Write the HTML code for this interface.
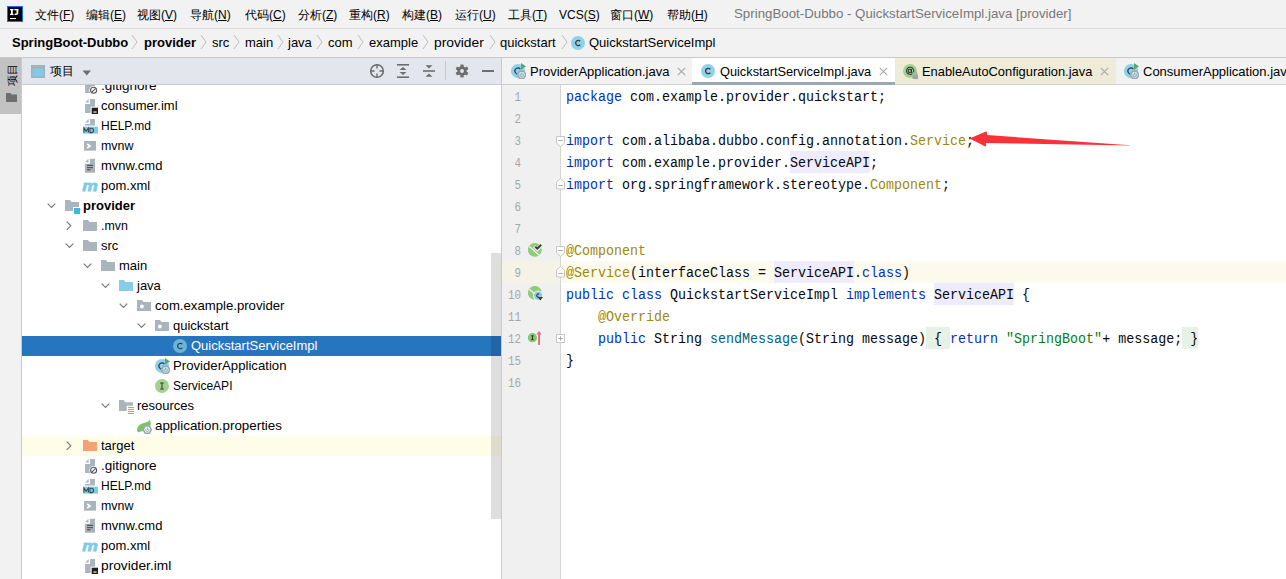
<!DOCTYPE html><html><head><meta charset="utf-8"><style>html,body{margin:0;padding:0;width:1286px;height:579px;overflow:hidden;background:#f2f2f2;position:relative}</style></head><body><div style="position:absolute;left:0px;top:0px;width:1286px;height:28px;background:#f2f2f2;"></div><div style="position:absolute;left:0px;top:28px;width:1286px;height:1px;background:#dcdcdc;"></div><svg style="position:absolute;left:7px;top:6px" width="16" height="16" viewBox="0 0 16 16"><rect x="0.5" y="0.5" width="15" height="15" fill="#000" stroke="#1a6ff5" stroke-width="1"/><g fill="#fff"><rect x="3" y="3" width="3.5" height="1.3"/><rect x="4" y="3" width="1.8" height="6"/><rect x="3" y="7.8" width="3.5" height="1.3"/><rect x="7.3" y="3" width="4" height="1.3"/><path d="M9.5 3 H11.3 V7 Q11.3 9.1 9.1 9.1 Q7.8 9.1 7.2 8.2 L8.2 7.3 Q8.5 7.7 9 7.7 Q9.5 7.7 9.5 7 Z"/></g><rect x="3" y="12" width="6" height="1.1" fill="#fff"/></svg><div style="position:absolute;left:35px;top:9.00px;font-family:'Liberation Sans', sans-serif;font-size:12px;line-height:12px;color:#000;font-weight:normal;white-space:pre;"><span style="font-weight:500">文件</span>(<u>F</u>)</div><div style="position:absolute;left:86px;top:9.00px;font-family:'Liberation Sans', sans-serif;font-size:12px;line-height:12px;color:#000;font-weight:normal;white-space:pre;"><span style="font-weight:500">编辑</span>(<u>E</u>)</div><div style="position:absolute;left:137px;top:9.00px;font-family:'Liberation Sans', sans-serif;font-size:12px;line-height:12px;color:#000;font-weight:normal;white-space:pre;"><span style="font-weight:500">视图</span>(<u>V</u>)</div><div style="position:absolute;left:190px;top:9.00px;font-family:'Liberation Sans', sans-serif;font-size:12px;line-height:12px;color:#000;font-weight:normal;white-space:pre;"><span style="font-weight:500">导航</span>(<u>N</u>)</div><div style="position:absolute;left:245px;top:9.00px;font-family:'Liberation Sans', sans-serif;font-size:12px;line-height:12px;color:#000;font-weight:normal;white-space:pre;"><span style="font-weight:500">代码</span>(<u>C</u>)</div><div style="position:absolute;left:298px;top:9.00px;font-family:'Liberation Sans', sans-serif;font-size:12px;line-height:12px;color:#000;font-weight:normal;white-space:pre;"><span style="font-weight:500">分析</span>(<u>Z</u>)</div><div style="position:absolute;left:349px;top:9.00px;font-family:'Liberation Sans', sans-serif;font-size:12px;line-height:12px;color:#000;font-weight:normal;white-space:pre;"><span style="font-weight:500">重构</span>(<u>R</u>)</div><div style="position:absolute;left:402px;top:9.00px;font-family:'Liberation Sans', sans-serif;font-size:12px;line-height:12px;color:#000;font-weight:normal;white-space:pre;"><span style="font-weight:500">构建</span>(<u>B</u>)</div><div style="position:absolute;left:455px;top:9.00px;font-family:'Liberation Sans', sans-serif;font-size:12px;line-height:12px;color:#000;font-weight:normal;white-space:pre;"><span style="font-weight:500">运行</span>(<u>U</u>)</div><div style="position:absolute;left:508px;top:9.00px;font-family:'Liberation Sans', sans-serif;font-size:12px;line-height:12px;color:#000;font-weight:normal;white-space:pre;"><span style="font-weight:500">工具</span>(<u>T</u>)</div><div style="position:absolute;left:559px;top:9.00px;font-family:'Liberation Sans', sans-serif;font-size:12px;line-height:12px;color:#000;font-weight:normal;white-space:pre;">VCS(<u>S</u>)</div><div style="position:absolute;left:610px;top:9.00px;font-family:'Liberation Sans', sans-serif;font-size:12px;line-height:12px;color:#000;font-weight:normal;white-space:pre;"><span style="font-weight:500">窗口</span>(<u>W</u>)</div><div style="position:absolute;left:667px;top:9.00px;font-family:'Liberation Sans', sans-serif;font-size:12px;line-height:12px;color:#000;font-weight:normal;white-space:pre;"><span style="font-weight:500">帮助</span>(<u>H</u>)</div><div style="position:absolute;left:734px;top:7.00px;font-family:'Liberation Sans', sans-serif;font-size:13px;line-height:13px;color:#787878;font-weight:normal;white-space:pre;transform:scaleX(1.022);transform-origin:0 0;">SpringBoot-Dubbo - QuickstartServiceImpl.java [provider]</div><div style="position:absolute;left:0px;top:29px;width:1286px;height:28px;background:#f2f2f2;"></div><div style="position:absolute;left:0px;top:57px;width:1286px;height:1px;background:#c9c9c9;"></div><div style="position:absolute;left:12px;top:36.00px;font-family:'Liberation Sans', sans-serif;font-size:13px;line-height:13px;color:#000;font-weight:bold;white-space:pre;">SpringBoot-Dubbo</div><svg style="position:absolute;left:131px;top:34px" width="7" height="16" viewBox="0 0 7 16"><polyline points="1,1 6,8 1,15" fill="none" stroke="#bdbdbd" stroke-width="1"/></svg><div style="position:absolute;left:144px;top:36.00px;font-family:'Liberation Sans', sans-serif;font-size:13px;line-height:13px;color:#000;font-weight:bold;white-space:pre;">provider</div><svg style="position:absolute;left:200px;top:34px" width="7" height="16" viewBox="0 0 7 16"><polyline points="1,1 6,8 1,15" fill="none" stroke="#bdbdbd" stroke-width="1"/></svg><div style="position:absolute;left:212px;top:36.00px;font-family:'Liberation Sans', sans-serif;font-size:13px;line-height:13px;color:#000;font-weight:normal;white-space:pre;">src</div><svg style="position:absolute;left:233px;top:34px" width="7" height="16" viewBox="0 0 7 16"><polyline points="1,1 6,8 1,15" fill="none" stroke="#bdbdbd" stroke-width="1"/></svg><div style="position:absolute;left:245px;top:36.00px;font-family:'Liberation Sans', sans-serif;font-size:13px;line-height:13px;color:#000;font-weight:normal;white-space:pre;">main</div><svg style="position:absolute;left:277px;top:34px" width="7" height="16" viewBox="0 0 7 16"><polyline points="1,1 6,8 1,15" fill="none" stroke="#bdbdbd" stroke-width="1"/></svg><div style="position:absolute;left:288px;top:36.00px;font-family:'Liberation Sans', sans-serif;font-size:13px;line-height:13px;color:#000;font-weight:normal;white-space:pre;">java</div><svg style="position:absolute;left:316px;top:34px" width="7" height="16" viewBox="0 0 7 16"><polyline points="1,1 6,8 1,15" fill="none" stroke="#bdbdbd" stroke-width="1"/></svg><div style="position:absolute;left:328px;top:36.00px;font-family:'Liberation Sans', sans-serif;font-size:13px;line-height:13px;color:#000;font-weight:normal;white-space:pre;">com</div><svg style="position:absolute;left:357px;top:34px" width="7" height="16" viewBox="0 0 7 16"><polyline points="1,1 6,8 1,15" fill="none" stroke="#bdbdbd" stroke-width="1"/></svg><div style="position:absolute;left:369px;top:36.00px;font-family:'Liberation Sans', sans-serif;font-size:13px;line-height:13px;color:#000;font-weight:normal;white-space:pre;">example</div><svg style="position:absolute;left:422px;top:34px" width="7" height="16" viewBox="0 0 7 16"><polyline points="1,1 6,8 1,15" fill="none" stroke="#bdbdbd" stroke-width="1"/></svg><div style="position:absolute;left:434px;top:36.00px;font-family:'Liberation Sans', sans-serif;font-size:13px;line-height:13px;color:#000;font-weight:normal;white-space:pre;transform:scaleX(1.06);transform-origin:0 0;">provider</div><svg style="position:absolute;left:489px;top:34px" width="7" height="16" viewBox="0 0 7 16"><polyline points="1,1 6,8 1,15" fill="none" stroke="#bdbdbd" stroke-width="1"/></svg><div style="position:absolute;left:500px;top:36.00px;font-family:'Liberation Sans', sans-serif;font-size:13px;line-height:13px;color:#000;font-weight:normal;white-space:pre;">quickstart</div><svg style="position:absolute;left:561px;top:34px" width="7" height="16" viewBox="0 0 7 16"><polyline points="1,1 6,8 1,15" fill="none" stroke="#bdbdbd" stroke-width="1"/></svg><svg style="position:absolute;left:571px;top:36px" width="14" height="14" viewBox="0 0 14 14"><circle cx="7" cy="7" r="7" fill="#8dd1ec"/><path d="M9.2 5.2 A2.6 2.6 0 1 0 9.2 8.8" fill="none" stroke="#3a3a3a" stroke-width="1.3"/></svg><div style="position:absolute;left:589px;top:36.00px;font-family:'Liberation Sans', sans-serif;font-size:13px;line-height:13px;color:#000;font-weight:normal;white-space:pre;">QuickstartServiceImpl</div><div style="position:absolute;left:0px;top:58px;width:21px;height:521px;background:#f2f2f2;"></div><div style="position:absolute;left:0px;top:58px;width:21px;height:56px;background:#c2c2c2;"></div><div style="position:absolute;left:21px;top:58px;width:1px;height:521px;background:#c9c9c9;"></div><div style="position:absolute;left:2px;top:63px;width:20px;height:24px;"><div style="position:absolute;left:-2px;top:4px;width:24px;height:16px;transform:rotate(-90deg);font-family:'Liberation Sans', sans-serif;font-size:11px;line-height:16px;color:#000;text-align:center;font-weight:500">项目</div></div><svg style="position:absolute;left:6px;top:93px" width="11" height="9" viewBox="0 0 11 9"><path d="M0 0 H4.5 L5.5 1.5 H11 V9 H0 Z" fill="#6e6e6e"/></svg><div style="position:absolute;left:22px;top:58px;width:479px;height:521px;background:#ffffff;"></div><svg style="position:absolute;left:82px;top:78px" width="16" height="16" viewBox="0 0 16 16"><path d="M3.1 4.6 L6.7 1.1 V4.6 Z" fill="#aab4bd"/><path d="M8.1 1.1 H13 V15 H3.1 V6.1 H8.1 Z" fill="#aab4bd"/><circle cx="11.6" cy="12.3" r="4.3" fill="#fff"/><circle cx="11.6" cy="12.3" r="3" fill="none" stroke="#555" stroke-width="1.1"/><path d="M9.6 14.3 L13.6 10.3" stroke="#555" stroke-width="1.1"/></svg><div style="position:absolute;left:101px;top:79.00px;font-family:'Liberation Sans', sans-serif;font-size:13px;line-height:13px;color:#000;font-weight:normal;white-space:pre;transform:scaleX(1.04);transform-origin:0 0;">.gitignore</div><svg style="position:absolute;left:82px;top:98px" width="16" height="16" viewBox="0 0 16 16"><path d="M3.1 4.6 L6.7 1.1 V4.6 Z" fill="#aab4bd"/><path d="M8.1 1.1 H13 V15 H3.1 V6.1 H8.1 Z" fill="#aab4bd"/><rect x="8.7" y="8.7" width="8" height="7.6" fill="#fff"/><rect x="9.7" y="9.7" width="6.5" height="6.4" fill="#231f20"/><rect x="11.4" y="13.5" width="3.2" height="1.1" fill="#fff"/></svg><div style="position:absolute;left:101px;top:99.00px;font-family:'Liberation Sans', sans-serif;font-size:13px;line-height:13px;color:#000;font-weight:normal;white-space:pre;">consumer.iml</div><svg style="position:absolute;left:82px;top:118px" width="16" height="16" viewBox="0 0 16 16"><path d="M3.1 4.6 L6.7 1.1 V4.6 Z" fill="#aab4bd"/><path d="M8.1 1.1 H13 V7.6 H3.1 V6.1 H8.1 Z" fill="#aab4bd"/><rect x="1" y="8.7" width="15.2" height="6.9" fill="#7fcbe6"/><path d="M2 14.6 V10.2 L4.2 13 L6.4 10.2 V14.6 M8 10.2 V14.6 H9.5 Q11.5 14.6 11.5 12.4 Q11.5 10.2 9.5 10.2 H8 Z" fill="none" stroke="#3d4650" stroke-width="1.1"/></svg><div style="position:absolute;left:101px;top:119.00px;font-family:'Liberation Sans', sans-serif;font-size:13px;line-height:13px;color:#000;font-weight:normal;white-space:pre;transform:scaleX(0.924);transform-origin:0 0;">HELP.md</div><svg style="position:absolute;left:82px;top:138px" width="16" height="16" viewBox="0 0 16 16"><rect x="2.1" y="3" width="11.9" height="9.7" fill="#aab4bd"/><polyline points="5.2,6 7.9,8.1 5.2,10.2" fill="none" stroke="#fff" stroke-width="1.7"/></svg><div style="position:absolute;left:101px;top:139.00px;font-family:'Liberation Sans', sans-serif;font-size:13px;line-height:13px;color:#000;font-weight:normal;white-space:pre;transform:scaleX(0.956);transform-origin:0 0;">mvnw</div><svg style="position:absolute;left:82px;top:158px" width="16" height="16" viewBox="0 0 16 16"><path d="M2.9 4.3 L6.5 0.8 V4.3 Z" fill="#aab4bd"/><path d="M7.9 0.8 H13 V14.8 H2.9 V5.8 H7.9 Z" fill="#aab4bd"/><g fill="#4d4d4d"><rect x="5" y="6.8" width="6" height="1.1"/><rect x="5" y="9.1" width="6" height="1.1"/><rect x="5" y="11.3" width="3.6" height="1.1"/></g></svg><div style="position:absolute;left:101px;top:159.00px;font-family:'Liberation Sans', sans-serif;font-size:13px;line-height:13px;color:#000;font-weight:normal;white-space:pre;">mvnw.cmd</div><svg style="position:absolute;left:82px;top:178px" width="16" height="16" viewBox="0 0 16 16"><text x="0.3" y="12.9" font-family="Liberation Sans" font-style="italic" font-weight="bold" font-size="14.5" fill="#7fcbe6" stroke="#7fcbe6" stroke-width="0.8" textLength="15.5" lengthAdjust="spacingAndGlyphs">m</text></svg><div style="position:absolute;left:101px;top:179.00px;font-family:'Liberation Sans', sans-serif;font-size:13px;line-height:13px;color:#000;font-weight:normal;white-space:pre;">pom.xml</div><svg style="position:absolute;left:47px;top:203px" width="10" height="6" viewBox="0 0 10 6"><polyline points="0.7,0.7 4.5,4.5 8.3,0.7" fill="none" stroke="#7a7a7a" stroke-width="1.2"/></svg><svg style="position:absolute;left:64px;top:198px" width="16" height="16" viewBox="0 0 16 16"><path d="M1 2 H6 L7.5 4 H15 V9 H9 V13 H1 Z" fill="#aab4bd"/><rect x="10" y="10" width="6" height="6" fill="#40b6e0"/></svg><div style="position:absolute;left:83px;top:199.00px;font-family:'Liberation Sans', sans-serif;font-size:13px;line-height:13px;color:#000;font-weight:bold;white-space:pre;">provider</div><svg style="position:absolute;left:66px;top:221px" width="6" height="10" viewBox="0 0 6 10"><polyline points="0.7,0.7 4.8,4.8 0.7,8.9" fill="none" stroke="#7a7a7a" stroke-width="1.2"/></svg><svg style="position:absolute;left:82px;top:218px" width="16" height="16" viewBox="0 0 16 16"><path d="M1 2 H6 L7.5 4 H15 V13 H1 Z" fill="#aab4bd"/></svg><div style="position:absolute;left:101px;top:219.00px;font-family:'Liberation Sans', sans-serif;font-size:13px;line-height:13px;color:#000;font-weight:normal;white-space:pre;transform:scaleX(0.95);transform-origin:0 0;">.mvn</div><svg style="position:absolute;left:65px;top:243px" width="10" height="6" viewBox="0 0 10 6"><polyline points="0.7,0.7 4.5,4.5 8.3,0.7" fill="none" stroke="#7a7a7a" stroke-width="1.2"/></svg><svg style="position:absolute;left:82px;top:238px" width="16" height="16" viewBox="0 0 16 16"><path d="M1 2 H6 L7.5 4 H15 V13 H1 Z" fill="#aab4bd"/></svg><div style="position:absolute;left:101px;top:239.00px;font-family:'Liberation Sans', sans-serif;font-size:13px;line-height:13px;color:#000;font-weight:normal;white-space:pre;">src</div><svg style="position:absolute;left:83px;top:263px" width="10" height="6" viewBox="0 0 10 6"><polyline points="0.7,0.7 4.5,4.5 8.3,0.7" fill="none" stroke="#7a7a7a" stroke-width="1.2"/></svg><svg style="position:absolute;left:100px;top:258px" width="16" height="16" viewBox="0 0 16 16"><path d="M1 2 H6 L7.5 4 H15 V13 H1 Z" fill="#aab4bd"/></svg><div style="position:absolute;left:119px;top:259.00px;font-family:'Liberation Sans', sans-serif;font-size:13px;line-height:13px;color:#000;font-weight:normal;white-space:pre;">main</div><svg style="position:absolute;left:101px;top:283px" width="10" height="6" viewBox="0 0 10 6"><polyline points="0.7,0.7 4.5,4.5 8.3,0.7" fill="none" stroke="#7a7a7a" stroke-width="1.2"/></svg><svg style="position:absolute;left:118px;top:278px" width="16" height="16" viewBox="0 0 16 16"><path d="M1 2 H6 L7.5 4 H15 V13 H1 Z" fill="#86cde8"/></svg><div style="position:absolute;left:137px;top:279.00px;font-family:'Liberation Sans', sans-serif;font-size:13px;line-height:13px;color:#000;font-weight:normal;white-space:pre;">java</div><svg style="position:absolute;left:119px;top:303px" width="10" height="6" viewBox="0 0 10 6"><polyline points="0.7,0.7 4.5,4.5 8.3,0.7" fill="none" stroke="#7a7a7a" stroke-width="1.2"/></svg><svg style="position:absolute;left:136px;top:298px" width="16" height="16" viewBox="0 0 16 16"><path d="M1 2 H6 L7.5 4 H15 V13 H1 Z" fill="#aab4bd"/><circle cx="5.9" cy="8.5" r="1.9" fill="#fff"/></svg><div style="position:absolute;left:155px;top:299.00px;font-family:'Liberation Sans', sans-serif;font-size:13px;line-height:13px;color:#000;font-weight:normal;white-space:pre;transform:scaleX(1.012);transform-origin:0 0;">com.example.provider</div><svg style="position:absolute;left:137px;top:323px" width="10" height="6" viewBox="0 0 10 6"><polyline points="0.7,0.7 4.5,4.5 8.3,0.7" fill="none" stroke="#7a7a7a" stroke-width="1.2"/></svg><svg style="position:absolute;left:154px;top:318px" width="16" height="16" viewBox="0 0 16 16"><path d="M1 2 H6 L7.5 4 H15 V13 H1 Z" fill="#aab4bd"/><circle cx="5.9" cy="8.5" r="1.9" fill="#fff"/></svg><div style="position:absolute;left:173px;top:319.00px;font-family:'Liberation Sans', sans-serif;font-size:13px;line-height:13px;color:#000;font-weight:normal;white-space:pre;">quickstart</div><div style="position:absolute;left:22px;top:336px;width:479px;height:20px;background:#2675bf;"></div><svg style="position:absolute;left:172px;top:338px" width="16" height="16" viewBox="0 0 16 16"><circle cx="8" cy="8" r="7" fill="#6ab5d6"/><path d="M10.3 6.2 A2.7 2.7 0 1 0 10.3 9.8" fill="none" stroke="#333e48" stroke-width="1.15"/></svg><div style="position:absolute;left:191px;top:339.00px;font-family:'Liberation Sans', sans-serif;font-size:13px;line-height:13px;color:#fff;font-weight:normal;white-space:pre;">QuickstartServiceImpl</div><svg style="position:absolute;left:154px;top:358px" width="16" height="16" viewBox="0 0 16 16"><circle cx="8" cy="8.1" r="7.1" fill="#8dd1ec"/><path d="M10.3 6 A3.1 3.1 0 1 0 9.5 10.8" fill="none" stroke="#3a3a3a" stroke-width="1.2"/><path d="M11 0 L16 3.4 L11 6.8 Z" fill="#59a869"/><polygon points="15.90,11.80 13.80,15.44 9.60,15.44 7.50,11.80 9.60,8.16 13.80,8.16" fill="#c9e8f3" stroke="#9aa7b0" stroke-width="1.5"/><path d="M10.50 10.90 A1.7 1.7 0 1 0 12.90 10.90" fill="none" stroke="#9aa7b0" stroke-width="1"/><path d="M11.70 9.60 V12.10" stroke="#9aa7b0" stroke-width="1"/></svg><div style="position:absolute;left:173px;top:359.00px;font-family:'Liberation Sans', sans-serif;font-size:13px;line-height:13px;color:#000;font-weight:normal;white-space:pre;transform:scaleX(1.013);transform-origin:0 0;">ProviderApplication</div><svg style="position:absolute;left:154px;top:378px" width="16" height="16" viewBox="0 0 16 16"><circle cx="8" cy="8" r="7" fill="#a1d38e"/><path d="M6.2 5 H9.8 M8 5 V11 M6.2 11 H9.8" stroke="#3d3d3d" stroke-width="1.1"/></svg><div style="position:absolute;left:173px;top:379.00px;font-family:'Liberation Sans', sans-serif;font-size:13px;line-height:13px;color:#000;font-weight:normal;white-space:pre;transform:scaleX(0.925);transform-origin:0 0;">ServiceAPI</div><svg style="position:absolute;left:101px;top:403px" width="10" height="6" viewBox="0 0 10 6"><polyline points="0.7,0.7 4.5,4.5 8.3,0.7" fill="none" stroke="#7a7a7a" stroke-width="1.2"/></svg><svg style="position:absolute;left:118px;top:398px" width="16" height="16" viewBox="0 0 16 16"><path d="M1 2 H5.6 L7.5 4.3 H15 V7.7 H8.7 V13 H1 Z" fill="#aab4bd"/><g fill="#e0a33a"><rect x="10" y="9" width="6" height="1.1"/><rect x="10" y="11" width="6" height="1.1"/><rect x="10" y="13" width="6" height="1.1"/><rect x="10" y="15" width="6" height="1.1"/></g></svg><div style="position:absolute;left:137px;top:399.00px;font-family:'Liberation Sans', sans-serif;font-size:13px;line-height:13px;color:#000;font-weight:normal;white-space:pre;">resources</div><svg style="position:absolute;left:136px;top:418px" width="16" height="16" viewBox="0 0 16 16"><path d="M1.5 14 C0 9.5 3 6 8 5 C11 4.3 12.8 3.8 13.6 1.8 C15.5 5 15 9 12 11.5 C9 13.5 5 13 2.5 14.3 Z" fill="#7cc36a"/><polygon points="15.40,11.60 13.35,15.15 9.25,15.15 7.20,11.60 9.25,8.05 13.35,8.05" fill="#ffffff" stroke="#9aa7b0" stroke-width="1.5"/><path d="M10.10 10.70 A1.7 1.7 0 1 0 12.50 10.70" fill="none" stroke="#9aa7b0" stroke-width="1"/><path d="M11.30 9.40 V11.90" stroke="#9aa7b0" stroke-width="1"/></svg><div style="position:absolute;left:155px;top:419.00px;font-family:'Liberation Sans', sans-serif;font-size:13px;line-height:13px;color:#000;font-weight:normal;white-space:pre;transform:scaleX(1.027);transform-origin:0 0;">application.properties</div><div style="position:absolute;left:22px;top:436px;width:479px;height:20px;background:#fefde8;"></div><svg style="position:absolute;left:66px;top:441px" width="6" height="10" viewBox="0 0 6 10"><polyline points="0.7,0.7 4.8,4.8 0.7,8.9" fill="none" stroke="#7a7a7a" stroke-width="1.2"/></svg><svg style="position:absolute;left:82px;top:438px" width="16" height="16" viewBox="0 0 16 16"><path d="M1 2 H6 L7.5 4 H15 V13 H1 Z" fill="#f4a271"/></svg><div style="position:absolute;left:101px;top:439.00px;font-family:'Liberation Sans', sans-serif;font-size:13px;line-height:13px;color:#000;font-weight:normal;white-space:pre;">target</div><svg style="position:absolute;left:82px;top:458px" width="16" height="16" viewBox="0 0 16 16"><path d="M3.1 4.6 L6.7 1.1 V4.6 Z" fill="#aab4bd"/><path d="M8.1 1.1 H13 V15 H3.1 V6.1 H8.1 Z" fill="#aab4bd"/><circle cx="11.6" cy="12.3" r="4.3" fill="#fff"/><circle cx="11.6" cy="12.3" r="3" fill="none" stroke="#555" stroke-width="1.1"/><path d="M9.6 14.3 L13.6 10.3" stroke="#555" stroke-width="1.1"/></svg><div style="position:absolute;left:101px;top:459.00px;font-family:'Liberation Sans', sans-serif;font-size:13px;line-height:13px;color:#000;font-weight:normal;white-space:pre;transform:scaleX(1.04);transform-origin:0 0;">.gitignore</div><svg style="position:absolute;left:82px;top:478px" width="16" height="16" viewBox="0 0 16 16"><path d="M3.1 4.6 L6.7 1.1 V4.6 Z" fill="#aab4bd"/><path d="M8.1 1.1 H13 V7.6 H3.1 V6.1 H8.1 Z" fill="#aab4bd"/><rect x="1" y="8.7" width="15.2" height="6.9" fill="#7fcbe6"/><path d="M2 14.6 V10.2 L4.2 13 L6.4 10.2 V14.6 M8 10.2 V14.6 H9.5 Q11.5 14.6 11.5 12.4 Q11.5 10.2 9.5 10.2 H8 Z" fill="none" stroke="#3d4650" stroke-width="1.1"/></svg><div style="position:absolute;left:101px;top:479.00px;font-family:'Liberation Sans', sans-serif;font-size:13px;line-height:13px;color:#000;font-weight:normal;white-space:pre;transform:scaleX(0.924);transform-origin:0 0;">HELP.md</div><svg style="position:absolute;left:82px;top:498px" width="16" height="16" viewBox="0 0 16 16"><rect x="2.1" y="3" width="11.9" height="9.7" fill="#aab4bd"/><polyline points="5.2,6 7.9,8.1 5.2,10.2" fill="none" stroke="#fff" stroke-width="1.7"/></svg><div style="position:absolute;left:101px;top:499.00px;font-family:'Liberation Sans', sans-serif;font-size:13px;line-height:13px;color:#000;font-weight:normal;white-space:pre;transform:scaleX(0.956);transform-origin:0 0;">mvnw</div><svg style="position:absolute;left:82px;top:518px" width="16" height="16" viewBox="0 0 16 16"><path d="M2.9 4.3 L6.5 0.8 V4.3 Z" fill="#aab4bd"/><path d="M7.9 0.8 H13 V14.8 H2.9 V5.8 H7.9 Z" fill="#aab4bd"/><g fill="#4d4d4d"><rect x="5" y="6.8" width="6" height="1.1"/><rect x="5" y="9.1" width="6" height="1.1"/><rect x="5" y="11.3" width="3.6" height="1.1"/></g></svg><div style="position:absolute;left:101px;top:519.00px;font-family:'Liberation Sans', sans-serif;font-size:13px;line-height:13px;color:#000;font-weight:normal;white-space:pre;">mvnw.cmd</div><svg style="position:absolute;left:82px;top:538px" width="16" height="16" viewBox="0 0 16 16"><text x="0.3" y="12.9" font-family="Liberation Sans" font-style="italic" font-weight="bold" font-size="14.5" fill="#7fcbe6" stroke="#7fcbe6" stroke-width="0.8" textLength="15.5" lengthAdjust="spacingAndGlyphs">m</text></svg><div style="position:absolute;left:101px;top:539.00px;font-family:'Liberation Sans', sans-serif;font-size:13px;line-height:13px;color:#000;font-weight:normal;white-space:pre;">pom.xml</div><svg style="position:absolute;left:82px;top:558px" width="16" height="16" viewBox="0 0 16 16"><path d="M3.1 4.6 L6.7 1.1 V4.6 Z" fill="#aab4bd"/><path d="M8.1 1.1 H13 V15 H3.1 V6.1 H8.1 Z" fill="#aab4bd"/><rect x="8.7" y="8.7" width="8" height="7.6" fill="#fff"/><rect x="9.7" y="9.7" width="6.5" height="6.4" fill="#231f20"/><rect x="11.4" y="13.5" width="3.2" height="1.1" fill="#fff"/></svg><div style="position:absolute;left:101px;top:559.00px;font-family:'Liberation Sans', sans-serif;font-size:13px;line-height:13px;color:#000;font-weight:normal;white-space:pre;transform:scaleX(1.057);transform-origin:0 0;">provider.iml</div><div style="position:absolute;left:491px;top:253px;width:10px;height:266px;background:rgba(0,0,0,0.13);"></div><div style="position:absolute;left:22px;top:58px;width:479px;height:26px;background:#e3e6ed;"></div><div style="position:absolute;left:22px;top:84px;width:479px;height:1px;background:#c9c9c9;"></div><svg style="position:absolute;left:31px;top:65px" width="14" height="13" viewBox="0 0 14 13"><rect x="0" y="0" width="14" height="13" fill="#a5b0b8"/><rect x="1.5" y="3.5" width="11" height="8" fill="#7fcbe6"/></svg><div style="position:absolute;left:50px;top:65.00px;font-family:'Liberation Sans', sans-serif;font-size:12px;line-height:12px;color:#000;font-weight:normal;white-space:pre;"><span style="font-weight:500">项目</span></div><svg style="position:absolute;left:82px;top:69.5px" width="10" height="6" viewBox="0 0 10 6"><path d="M0.5 0.5 H9 L4.75 5.5 Z" fill="#6e6e6e"/></svg><svg style="position:absolute;left:369px;top:63px" width="16" height="16" viewBox="0 0 16 16"><circle cx="8" cy="8" r="6.3" fill="none" stroke="#6e6e6e" stroke-width="1.6"/><path d="M8 1.5 V5.5 M8 10.5 V14.5 M1.5 8 H5.5 M10.5 8 H14.5" stroke="#6e6e6e" stroke-width="1.4"/></svg><svg style="position:absolute;left:396px;top:63px" width="14" height="16" viewBox="0 0 14 16"><rect x="1" y="1" width="12" height="1.6" fill="#6e6e6e"/><rect x="1" y="13.4" width="12" height="1.6" fill="#6e6e6e"/><path d="M3.5 7 L7 4 L10.5 7 Z M3.5 9 L7 12 L10.5 9 Z" fill="#6e6e6e"/></svg><svg style="position:absolute;left:422px;top:63px" width="14" height="16" viewBox="0 0 14 16"><rect x="1" y="7.2" width="12" height="1.6" fill="#6e6e6e"/><path d="M3.5 2.3 L10.5 2.3 L7 5.6 Z M3.5 13.7 L10.5 13.7 L7 10.4 Z" fill="#6e6e6e"/></svg><div style="position:absolute;left:445px;top:61px;width:1px;height:19px;background:#c4c8cf;"></div><svg style="position:absolute;left:455px;top:64px" width="14" height="14" viewBox="0 0 14 14"><g fill="#6e6e6e"><circle cx="7" cy="7" r="4.7"/><rect x="5.4" y="0.5" width="3.2" height="3.2" rx="0.6" transform="rotate(0 7 7)"/><rect x="5.4" y="0.5" width="3.2" height="3.2" rx="0.6" transform="rotate(60 7 7)"/><rect x="5.4" y="0.5" width="3.2" height="3.2" rx="0.6" transform="rotate(120 7 7)"/><rect x="5.4" y="0.5" width="3.2" height="3.2" rx="0.6" transform="rotate(180 7 7)"/><rect x="5.4" y="0.5" width="3.2" height="3.2" rx="0.6" transform="rotate(240 7 7)"/><rect x="5.4" y="0.5" width="3.2" height="3.2" rx="0.6" transform="rotate(300 7 7)"/></g><circle cx="7" cy="7" r="1.9" fill="#e3e6ed"/></svg><div style="position:absolute;left:482px;top:70px;width:12px;height:2px;background:#6e6e6e;"></div><div style="position:absolute;left:501px;top:58px;width:1px;height:521px;background:#c9c9c9;"></div><div style="position:absolute;left:502px;top:58px;width:784px;height:26px;background:#f2f2f2;"></div><div style="position:absolute;left:502px;top:84px;width:784px;height:1px;background:#d0d0d0;"></div><div style="position:absolute;left:692px;top:58px;width:203px;height:24px;background:#ffffff;"></div><div style="position:absolute;left:692px;top:82px;width:203px;height:3px;background:#9ca7b7;"></div><div style="position:absolute;left:895px;top:58px;width:221px;height:26px;background:#eeecd9;"></div><svg style="position:absolute;left:510px;top:63px" width="16" height="16" viewBox="0 0 16 16"><circle cx="8" cy="8.1" r="7.1" fill="#8dd1ec"/><path d="M10.3 6 A3.1 3.1 0 1 0 9.5 10.8" fill="none" stroke="#3a3a3a" stroke-width="1.2"/><path d="M11 0 L16 3.4 L11 6.8 Z" fill="#59a869"/><polygon points="15.90,11.80 13.80,15.44 9.60,15.44 7.50,11.80 9.60,8.16 13.80,8.16" fill="#c9e8f3" stroke="#9aa7b0" stroke-width="1.5"/><path d="M10.50 10.90 A1.7 1.7 0 1 0 12.90 10.90" fill="none" stroke="#9aa7b0" stroke-width="1"/><path d="M11.70 9.60 V12.10" stroke="#9aa7b0" stroke-width="1"/></svg><div style="position:absolute;left:530px;top:65.00px;font-family:'Liberation Sans', sans-serif;font-size:13px;line-height:13px;color:#000;font-weight:normal;white-space:pre;">ProviderApplication.java</div><svg style="position:absolute;left:677px;top:67px" width="9" height="9" viewBox="0 0 9 9"><path d="M0.8 0.8 L8.2 8.2 M8.2 0.8 L0.8 8.2" stroke="#a8a8a8" stroke-width="1.1"/></svg><svg style="position:absolute;left:700px;top:63px" width="16" height="16" viewBox="0 0 16 16"><circle cx="8" cy="8" r="7" fill="#8dd1ec"/><path d="M10.3 6.2 A2.7 2.7 0 1 0 10.3 9.8" fill="none" stroke="#3a3a3a" stroke-width="1.3"/></svg><div style="position:absolute;left:720px;top:65.00px;font-family:'Liberation Sans', sans-serif;font-size:13px;line-height:13px;color:#000;font-weight:normal;white-space:pre;transform:scaleX(0.982);transform-origin:0 0;">QuickstartServiceImpl.java</div><svg style="position:absolute;left:879px;top:67px" width="9" height="9" viewBox="0 0 9 9"><path d="M0.8 0.8 L8.2 8.2 M8.2 0.8 L0.8 8.2" stroke="#a8a8a8" stroke-width="1.1"/></svg><svg style="position:absolute;left:903px;top:64px" width="16" height="16" viewBox="0 0 16 16"><circle cx="7" cy="7" r="7" fill="#a1d38e"/><path d="M10.5 8.2 A3.6 3.6 0 1 0 8.9 10" fill="none" stroke="#333" stroke-width="1.1"/><circle cx="6.8" cy="6.9" r="1.6" fill="none" stroke="#333" stroke-width="1.1"/><path d="M8.4 5 V7.8 Q8.5 9 9.6 9" fill="none" stroke="#333" stroke-width="1.1"/><rect x="9.5" y="10.5" width="5.5" height="4.5" fill="#9aa7b0"/><path d="M10.7 10.5 V9.5 A1.55 1.55 0 0 1 13.8 9.5 V10.5" fill="none" stroke="#9aa7b0" stroke-width="1.1"/></svg><div style="position:absolute;left:922px;top:65.00px;font-family:'Liberation Sans', sans-serif;font-size:13px;line-height:13px;color:#000;font-weight:normal;white-space:pre;transform:scaleX(0.99);transform-origin:0 0;">EnableAutoConfiguration.java</div><svg style="position:absolute;left:1100px;top:67px" width="9" height="9" viewBox="0 0 9 9"><path d="M0.8 0.8 L8.2 8.2 M8.2 0.8 L0.8 8.2" stroke="#a8a8a8" stroke-width="1.1"/></svg><svg style="position:absolute;left:1123px;top:63px" width="16" height="16" viewBox="0 0 16 16"><circle cx="8" cy="8.1" r="7.1" fill="#8dd1ec"/><path d="M10.3 6 A3.1 3.1 0 1 0 9.5 10.8" fill="none" stroke="#3a3a3a" stroke-width="1.2"/><path d="M11 0 L16 3.4 L11 6.8 Z" fill="#59a869"/><polygon points="15.90,11.80 13.80,15.44 9.60,15.44 7.50,11.80 9.60,8.16 13.80,8.16" fill="#c9e8f3" stroke="#9aa7b0" stroke-width="1.5"/><path d="M10.50 10.90 A1.7 1.7 0 1 0 12.90 10.90" fill="none" stroke="#9aa7b0" stroke-width="1"/><path d="M11.70 9.60 V12.10" stroke="#9aa7b0" stroke-width="1"/></svg><div style="position:absolute;left:1143px;top:65.00px;font-family:'Liberation Sans', sans-serif;font-size:13px;line-height:13px;color:#000;font-weight:normal;white-space:pre;">ConsumerApplication.java</div><div style="position:absolute;left:502px;top:85px;width:784px;height:494px;background:#ffffff;"></div><div style="position:absolute;left:502px;top:85px;width:58px;height:494px;background:#f0f0f0;"></div><div style="position:absolute;left:560px;top:85px;width:1px;height:494px;background:#d5d5d5;"></div><div style="position:absolute;left:502px;top:261px;width:58px;height:22px;background:#f5f3e6;"></div><div style="position:absolute;left:561px;top:261px;width:725px;height:22px;background:#fcfaed;"></div><div style="position:absolute;left:790px;top:151px;width:80px;height:22px;background:#edebfc;"></div><div style="position:absolute;left:774px;top:261px;width:80px;height:22px;background:#edebfc;"></div><div style="position:absolute;left:934px;top:283px;width:80px;height:22px;background:#edebfc;"></div><div style="position:absolute;left:926px;top:327px;width:24px;height:22px;background:#e5f2e5;"></div><div style="position:absolute;left:1182px;top:327px;width:16px;height:22px;background:#e5f2e5;"></div><div style="position:absolute;left:500px;top:85px;width:21px;height:22px;text-align:right;font-family:'Liberation Mono', monospace;font-size:12px;line-height:22px;color:#a6a6a6;padding-top:2px;box-sizing:border-box;transform:scaleX(0.9);transform-origin:100% 0">1</div><div style="position:absolute;left:500px;top:107px;width:21px;height:22px;text-align:right;font-family:'Liberation Mono', monospace;font-size:12px;line-height:22px;color:#a6a6a6;padding-top:2px;box-sizing:border-box;transform:scaleX(0.9);transform-origin:100% 0">2</div><div style="position:absolute;left:500px;top:129px;width:21px;height:22px;text-align:right;font-family:'Liberation Mono', monospace;font-size:12px;line-height:22px;color:#a6a6a6;padding-top:2px;box-sizing:border-box;transform:scaleX(0.9);transform-origin:100% 0">3</div><div style="position:absolute;left:500px;top:151px;width:21px;height:22px;text-align:right;font-family:'Liberation Mono', monospace;font-size:12px;line-height:22px;color:#a6a6a6;padding-top:2px;box-sizing:border-box;transform:scaleX(0.9);transform-origin:100% 0">4</div><div style="position:absolute;left:500px;top:173px;width:21px;height:22px;text-align:right;font-family:'Liberation Mono', monospace;font-size:12px;line-height:22px;color:#a6a6a6;padding-top:2px;box-sizing:border-box;transform:scaleX(0.9);transform-origin:100% 0">5</div><div style="position:absolute;left:500px;top:195px;width:21px;height:22px;text-align:right;font-family:'Liberation Mono', monospace;font-size:12px;line-height:22px;color:#a6a6a6;padding-top:2px;box-sizing:border-box;transform:scaleX(0.9);transform-origin:100% 0">6</div><div style="position:absolute;left:500px;top:217px;width:21px;height:22px;text-align:right;font-family:'Liberation Mono', monospace;font-size:12px;line-height:22px;color:#a6a6a6;padding-top:2px;box-sizing:border-box;transform:scaleX(0.9);transform-origin:100% 0">7</div><div style="position:absolute;left:500px;top:239px;width:21px;height:22px;text-align:right;font-family:'Liberation Mono', monospace;font-size:12px;line-height:22px;color:#a6a6a6;padding-top:2px;box-sizing:border-box;transform:scaleX(0.9);transform-origin:100% 0">8</div><div style="position:absolute;left:500px;top:261px;width:21px;height:22px;text-align:right;font-family:'Liberation Mono', monospace;font-size:12px;line-height:22px;color:#a6a6a6;padding-top:2px;box-sizing:border-box;transform:scaleX(0.9);transform-origin:100% 0">9</div><div style="position:absolute;left:500px;top:283px;width:21px;height:22px;text-align:right;font-family:'Liberation Mono', monospace;font-size:12px;line-height:22px;color:#a6a6a6;padding-top:2px;box-sizing:border-box;transform:scaleX(0.9);transform-origin:100% 0">10</div><div style="position:absolute;left:500px;top:305px;width:21px;height:22px;text-align:right;font-family:'Liberation Mono', monospace;font-size:12px;line-height:22px;color:#a6a6a6;padding-top:2px;box-sizing:border-box;transform:scaleX(0.9);transform-origin:100% 0">11</div><div style="position:absolute;left:500px;top:327px;width:21px;height:22px;text-align:right;font-family:'Liberation Mono', monospace;font-size:12px;line-height:22px;color:#a6a6a6;padding-top:2px;box-sizing:border-box;transform:scaleX(0.9);transform-origin:100% 0">12</div><div style="position:absolute;left:500px;top:349px;width:21px;height:22px;text-align:right;font-family:'Liberation Mono', monospace;font-size:12px;line-height:22px;color:#a6a6a6;padding-top:2px;box-sizing:border-box;transform:scaleX(0.9);transform-origin:100% 0">15</div><div style="position:absolute;left:500px;top:371px;width:21px;height:22px;text-align:right;font-family:'Liberation Mono', monospace;font-size:12px;line-height:22px;color:#a6a6a6;padding-top:2px;box-sizing:border-box;transform:scaleX(0.9);transform-origin:100% 0">16</div><div style="position:absolute;left:566px;top:86px;height:22px;font-family:'Liberation Mono', monospace;font-size:14.5px;line-height:22px;white-space:pre;transform:scaleX(0.9195);transform-origin:0 0"><span style="color:#0033b3;">package</span><span style="color:#080808;"> com.example.provider.quickstart;</span></div><div style="position:absolute;left:566px;top:130px;height:22px;font-family:'Liberation Mono', monospace;font-size:14.5px;line-height:22px;white-space:pre;transform:scaleX(0.9195);transform-origin:0 0"><span style="color:#0033b3;">import</span><span style="color:#080808;"> com.alibaba.dubbo.config.annotation.</span><span style="color:#9e880d;">Service</span><span style="color:#080808;">;</span></div><div style="position:absolute;left:566px;top:152px;height:22px;font-family:'Liberation Mono', monospace;font-size:14.5px;line-height:22px;white-space:pre;transform:scaleX(0.9195);transform-origin:0 0"><span style="color:#0033b3;">import</span><span style="color:#080808;"> com.example.provider.</span><span style="color:#080808;">ServiceAPI</span><span style="color:#080808;">;</span></div><div style="position:absolute;left:566px;top:174px;height:22px;font-family:'Liberation Mono', monospace;font-size:14.5px;line-height:22px;white-space:pre;transform:scaleX(0.9195);transform-origin:0 0"><span style="color:#0033b3;">import</span><span style="color:#080808;"> org.springframework.stereotype.</span><span style="color:#9e880d;">Component</span><span style="color:#080808;">;</span></div><div style="position:absolute;left:566px;top:240px;height:22px;font-family:'Liberation Mono', monospace;font-size:14.5px;line-height:22px;white-space:pre;transform:scaleX(0.9195);transform-origin:0 0"><span style="color:#9e880d;">@Component</span></div><div style="position:absolute;left:566px;top:262px;height:22px;font-family:'Liberation Mono', monospace;font-size:14.5px;line-height:22px;white-space:pre;transform:scaleX(0.9195);transform-origin:0 0"><span style="color:#9e880d;">@Service</span><span style="color:#080808;">(interfaceClass = </span><span style="color:#080808;">ServiceAPI</span><span style="color:#080808;">.</span><span style="color:#0033b3;">class</span><span style="color:#080808;">)</span></div><div style="position:absolute;left:566px;top:284px;height:22px;font-family:'Liberation Mono', monospace;font-size:14.5px;line-height:22px;white-space:pre;transform:scaleX(0.9195);transform-origin:0 0"><span style="color:#0033b3;">public class</span><span style="color:#080808;"> QuickstartServiceImpl </span><span style="color:#0033b3;">implements</span><span style="color:#080808;"> </span><span style="color:#080808;">ServiceAPI</span><span style="color:#080808;"> {</span></div><div style="position:absolute;left:566px;top:306px;height:22px;font-family:'Liberation Mono', monospace;font-size:14.5px;line-height:22px;white-space:pre;transform:scaleX(0.9195);transform-origin:0 0"><span style="color:#080808;">    </span><span style="color:#9e880d;">@Override</span></div><div style="position:absolute;left:566px;top:328px;height:22px;font-family:'Liberation Mono', monospace;font-size:14.5px;line-height:22px;white-space:pre;transform:scaleX(0.9195);transform-origin:0 0"><span style="color:#080808;">    </span><span style="color:#0033b3;">public</span><span style="color:#080808;"> String </span><span style="color:#00627a;">sendMessage</span><span style="color:#080808;">(String message)</span><span style="color:#080808;"> { </span><span style="color:#0033b3;">return</span><span style="color:#080808;"> </span><span style="color:#067d17;">&quot;SpringBoot&quot;</span><span style="color:#080808;">+ message;</span><span style="color:#080808;"> }</span></div><div style="position:absolute;left:566px;top:350px;height:22px;font-family:'Liberation Mono', monospace;font-size:14.5px;line-height:22px;white-space:pre;transform:scaleX(0.9195);transform-origin:0 0"><span style="color:#080808;">}</span></div><svg style="position:absolute;left:556px;top:135.5px" width="10" height="13" viewBox="0 0 10 13"><path d="M0.5 0.5 H8.5 V7 L4.5 10.5 L0.5 7 Z" fill="#fff" stroke="#c6c6c6" stroke-width="1"/><path d="M2.3 4.5 H6.7" stroke="#a8a8a8" stroke-width="1"/></svg><svg style="position:absolute;left:556px;top:177px" width="10" height="13" viewBox="0 0 10 13"><path d="M0.5 12 H8.5 V5.3 L4.5 1.5 L0.5 5.3 Z" fill="#fff" stroke="#c6c6c6" stroke-width="1"/><path d="M2.3 8.5 H6.7" stroke="#a8a8a8" stroke-width="1"/></svg><svg style="position:absolute;left:556px;top:245.5px" width="10" height="13" viewBox="0 0 10 13"><path d="M0.5 0.5 H8.5 V7 L4.5 10.5 L0.5 7 Z" fill="#fff" stroke="#c6c6c6" stroke-width="1"/><path d="M2.3 4.5 H6.7" stroke="#a8a8a8" stroke-width="1"/></svg><svg style="position:absolute;left:556px;top:265px" width="10" height="13" viewBox="0 0 10 13"><path d="M0.5 12 H8.5 V5.3 L4.5 1.5 L0.5 5.3 Z" fill="#fff" stroke="#c6c6c6" stroke-width="1"/><path d="M2.3 8.5 H6.7" stroke="#a8a8a8" stroke-width="1"/></svg><svg style="position:absolute;left:556px;top:334px" width="10" height="10" viewBox="0 0 10 10"><rect x="0.5" y="0.5" width="8" height="8" fill="#fff" stroke="#c6c6c6" stroke-width="1"/><path d="M2.3 4.5 H6.7 M4.5 2.3 V6.7" stroke="#a8a8a8" stroke-width="1"/></svg><svg style="position:absolute;left:528px;top:243px" width="16" height="16" viewBox="0 0 16 16"><circle cx="6.85" cy="6.85" r="6.95" fill="#8fcb7b"/><path d="M1.4 3.4 L11.5 12.5" stroke="#f0f0f0" stroke-width="1.3"/><path d="M6.2 3.5 L9.3 6.3 L14 1.5" fill="none" stroke="#f0f0f0" stroke-width="3.4"/><path d="M7.2 3.8 L9.3 5.6 L13.2 1.7" fill="none" stroke="#3d3d3d" stroke-width="2"/></svg><svg style="position:absolute;left:528px;top:286px" width="17" height="17" viewBox="0 0 17 17"><circle cx="6.85" cy="6.85" r="6.95" fill="#8fcb7b"/><path d="M1.4 3.2 L11.5 12.5" stroke="#f0f0f0" stroke-width="1.3"/><circle cx="10.1" cy="9.6" r="5.2" fill="#f0f0f0"/><circle cx="10.1" cy="9.6" r="4.15" fill="#86cbe8"/><path d="M11.2 8.3 A1.6 1.6 0 1 0 11.2 10.9" fill="none" stroke="#3d3d3d" stroke-width="1.1"/><path d="M9.6 11 L15 11 L12.3 14.5 Z" fill="#3d3d3d"/></svg><svg style="position:absolute;left:527px;top:331px" width="16" height="16" viewBox="0 0 16 16"><circle cx="5.45" cy="6.7" r="4.6" fill="#83c66f"/><path d="M4.3 4.8 H6.6 M5.45 4.8 V8.6 M4.3 8.6 H6.6" stroke="#2d2d2d" stroke-width="1"/><path d="M12.05 3 V14" stroke="#e66a76" stroke-width="1.9"/><path d="M9.4 3.6 L12.05 0 L14.7 3.6 Z" fill="#e66a76"/></svg><svg style="position:absolute;left:960px;top:125px" width="180" height="30" viewBox="0 0 180 30"><path d="M9.5 13.6 L26.6 6.3 L27.3 10.1 L170 20.3 L170.5 20.6 L25.9 17.9 L25.9 21.7 Z" fill="#fb3137"/></svg></body></html>
